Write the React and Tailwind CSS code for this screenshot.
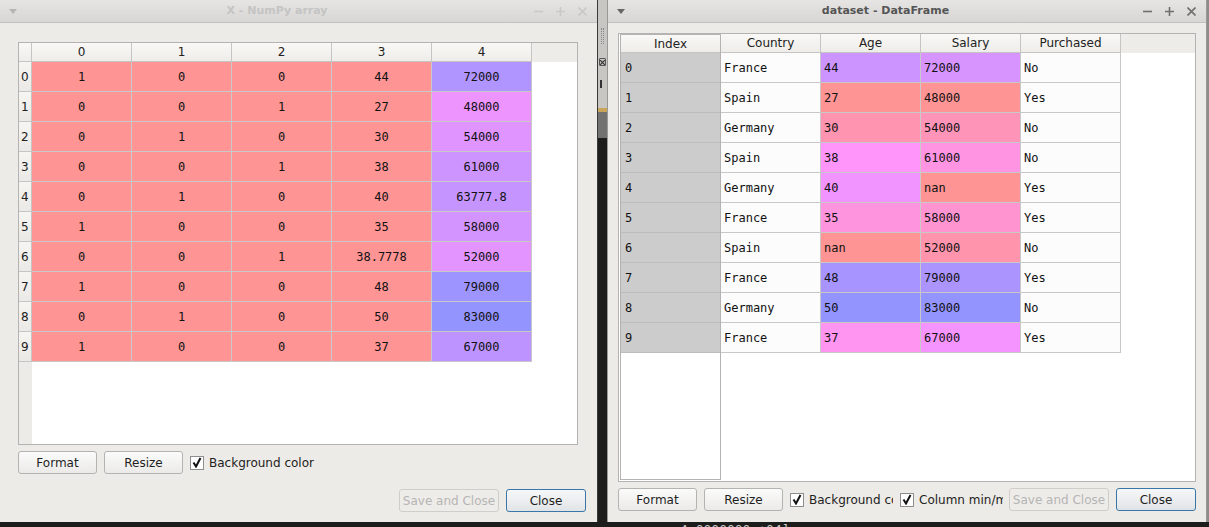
import React from "react";

const LEFT = [
  [1, 0, 0, 44, 72000],
  [0, 0, 1, 27, 48000],
  [0, 1, 0, 30, 54000],
  [0, 0, 1, 38, 61000],
  [0, 1, 0, 40, 63777.8],
  [1, 0, 0, 35, 58000],
  [0, 0, 1, 38.7778, 52000],
  [1, 0, 0, 48, 79000],
  [0, 1, 0, 50, 83000],
  [1, 0, 0, 37, 67000],
];

const DF = [
  ["France", 44, 72000, "No"],
  ["Spain", 27, 48000, "Yes"],
  ["Germany", 30, 54000, "No"],
  ["Spain", 38, 61000, "No"],
  ["Germany", 40, NaN, "Yes"],
  ["France", 35, 58000, "Yes"],
  ["Spain", NaN, 52000, "No"],
  ["France", 48, 79000, "Yes"],
  ["Germany", 50, 83000, "No"],
  ["France", 37, 67000, "Yes"],
];

function heat(v, min, max) {
  if (Number.isNaN(v)) return "rgb(255,148,148)";
  const t = max === min ? 0 : (max - v) / (max - min);
  const h = 240 + 120 * t;
  const lo = 148,
    hi = 255;
  let r, g, b;
  if (h <= 300) {
    r = lo + ((h - 240) / 60) * (hi - lo);
    g = lo;
    b = hi;
  } else {
    r = hi;
    g = lo;
    b = hi - ((h - 300) / 60) * (hi - lo);
  }
  return `rgb(${Math.round(r)},${g},${Math.round(b)})`;
}

function fmt(v) {
  if (Number.isNaN(v)) return "nan";
  return String(v);
}

function TitleBar({ title, active }) {
  const c = active ? "#6f6f6f" : "#c9c9c9";
  return (
    <div className="h-[23px] shrink-0 flex items-center bg-linear-to-b from-[#e6e5e3] to-[#d7d6d4] border-b border-[#c2c1bf]">
      <div className="w-[24px] flex justify-center pl-[2px]">
        <svg width="8" height="5" viewBox="0 0 8 5">
          <path d="M0 0 L8 0 L4 5 Z" fill={active ? "#666" : "#b5b5b5"} />
        </svg>
      </div>
      <div
        className={
          "flex-1 text-center font-bold text-[11px] " +
          (active ? "text-[#555555]" : "text-[#c4c4c4]")
        }
      >
        {title}
      </div>
      <div className="flex items-center gap-[13px] pr-[10px] pl-[4px]">
        <svg width="9" height="9" viewBox="0 0 9 9">
          <path d="M0 4.5 H9" stroke={c} strokeWidth="1.6" />
        </svg>
        <svg width="9" height="9" viewBox="0 0 9 9">
          <path d="M0 4.5 H9 M4.5 0 V9" stroke={c} strokeWidth="1.6" />
        </svg>
        <svg width="9" height="9" viewBox="0 0 9 9">
          <path d="M0.5 0.5 L8.5 8.5 M8.5 0.5 L0.5 8.5" stroke={c} strokeWidth="1.6" />
        </svg>
      </div>
    </div>
  );
}

function Btn({ children, w, kind }) {
  let cls =
    "h-[23px] shrink-0 rounded-[3px] border text-[12px] flex items-center justify-center whitespace-nowrap ";
  if (kind === "disabled")
    cls += "border-[#d0cecb] bg-[#eeece9] text-[#b5b5b5]";
  else if (kind === "default")
    cls +=
      "border-[#3a77a8] bg-linear-to-b from-[#f6f7f8] to-[#e1e4e7] text-[#1e1e1e]";
  else
    cls +=
      "border-[#b4b3b1] bg-linear-to-b from-[#fbfbfb] to-[#ebeae8] text-[#1e1e1e]";
  return (
    <div className={cls} style={{ width: w }}>
      {children}
    </div>
  );
}

function Check() {
  return (
    <div className="w-[14px] h-[14px] shrink-0 border border-[#8e8e8e] bg-white flex items-center justify-center">
      <svg width="10" height="11" viewBox="0 0 10 11">
        <path d="M1.5 5.5 L4 9.5 L8.5 1" stroke="#111" strokeWidth="2" fill="none" />
      </svg>
    </div>
  );
}

function LeftWindow() {
  return (
    <div className="w-[598px] h-[522px] shrink-0 flex flex-col bg-[#edebe7] border-r border-[#3a3a38]">
      <TitleBar title="X - NumPy array" active={false} />
      <div className="flex flex-col pl-[18px] pt-[19px]">
        <div className="w-[560px] h-[403px] border border-[#b4b3b1] bg-white flex flex-col overflow-hidden">
          <div className="h-[19px] shrink-0 flex bg-[#eeece9]">
            <div className="w-[13px] shrink-0 border-r border-b border-[#c6c5c3] bg-linear-to-b from-[#f9f8f6] to-[#efede9]" />
            {[0, 1, 2, 3, 4].map((i) => (
              <div
                key={i}
                className="w-[100px] shrink-0 border-r border-b border-[#c6c5c3] bg-linear-to-b from-[#f9f8f6] to-[#efede9] flex items-center justify-center text-[12px] text-[#222]"
              >
                {i}
              </div>
            ))}
          </div>
          {LEFT.map((row, r) => (
            <div key={r} className="h-[30px] shrink-0 flex">
              <div className="w-[13px] shrink-0 border-r border-b border-[#c6c5c3] bg-linear-to-b from-[#f6f5f2] to-[#ebe9e5] flex items-center pl-[2px] text-[12px] text-[#222]">
                {r}
              </div>
              {row.map((v, c) => (
                <div
                  key={c}
                  className="w-[100px] shrink-0 border-r border-b border-[#c8c8c8] flex items-center justify-center font-['DejaVu_Sans_Mono',monospace] text-[12px] text-[#111]"
                  style={{ backgroundColor: heat(v, 0, 83000) }}
                >
                  {fmt(v)}
                </div>
              ))}
            </div>
          ))}
          <div className="flex-1 flex">
            <div className="w-[13px] shrink-0 bg-[#edebe7]" />
            <div className="flex-1 bg-white" />
          </div>
        </div>
        <div className="flex items-center h-[23px] mt-[6px] gap-[7px]">
          <Btn w="79px">Format</Btn>
          <Btn w="79px">Resize</Btn>
          <div className="flex items-center gap-[5px] text-[12px] text-[#222]">
            <Check />
            <span>Background color</span>
          </div>
        </div>
        <div className="flex items-center justify-end h-[23px] mt-[15px] pr-[11px] gap-[7px]">
          <Btn w="100px" kind="disabled">
            Save and Close
          </Btn>
          <Btn w="80px" kind="default">
            Close
          </Btn>
        </div>
      </div>
    </div>
  );
}

function RightWindow() {
  const ageMin = 27,
    ageMax = 50,
    salMin = 48000,
    salMax = 83000;
  return (
    <div className="w-[600px] h-[522px] shrink-0 flex flex-col bg-[#edebe7] border-l border-r border-[#9a9997]">
      <TitleBar title="dataset - DataFrame" active={true} />
      <div className="flex flex-col pl-[10px] pt-[10px]">
        <div className="w-[578px] h-[449px] border border-[#b4b3b1] bg-white flex overflow-hidden">
          <div className="w-[101px] shrink-0 ml-[1px] mb-[1px] border-l border-r border-b border-t border-[#b4b3b1] flex flex-col bg-white">
            <div className="h-[18px] shrink-0 border-b border-[#c6c5c3] bg-linear-to-b from-[#f9f8f6] to-[#efede9] flex items-center justify-center text-[12px] text-[#222]">
              Index
            </div>
            {DF.map((_, r) => (
              <div
                key={r}
                className="h-[30px] shrink-0 border-b border-[#bdbdbd] bg-[#cccccc] flex items-center pl-[4px] font-['DejaVu_Sans_Mono',monospace] text-[12px] text-[#111]"
              >
                {r}
              </div>
            ))}
          </div>
          <div className="flex-1 flex flex-col">
            <div className="h-[19px] shrink-0 flex bg-[#eeece9]">
              {["Country", "Age", "Salary", "Purchased"].map((h) => (
                <div
                  key={h}
                  className="w-[100px] shrink-0 border-r border-b border-[#c6c5c3] bg-linear-to-b from-[#f9f8f6] to-[#efede9] flex items-center justify-center text-[12px] text-[#222]"
                >
                  {h}
                </div>
              ))}
            </div>
            {DF.map((row, r) => (
              <div key={r} className="h-[30px] shrink-0 flex">
                <div className="w-[100px] shrink-0 border-r border-b border-[#c8c8c8] bg-[#fcfcfc] flex items-center pl-[3px] font-['DejaVu_Sans_Mono',monospace] text-[12px] text-[#111]">
                  {row[0]}
                </div>
                <div
                  className="w-[100px] shrink-0 border-r border-b border-[#c8c8c8] flex items-center pl-[3px] font-['DejaVu_Sans_Mono',monospace] text-[12px] text-[#111]"
                  style={{ backgroundColor: heat(row[1], ageMin, ageMax) }}
                >
                  {fmt(row[1])}
                </div>
                <div
                  className="w-[100px] shrink-0 border-r border-b border-[#c8c8c8] flex items-center pl-[3px] font-['DejaVu_Sans_Mono',monospace] text-[12px] text-[#111]"
                  style={{ backgroundColor: heat(row[2], salMin, salMax) }}
                >
                  {fmt(row[2])}
                </div>
                <div className="w-[100px] shrink-0 border-r border-b border-[#c8c8c8] bg-[#fcfcfc] flex items-center pl-[3px] font-['DejaVu_Sans_Mono',monospace] text-[12px] text-[#111]">
                  {row[3]}
                </div>
              </div>
            ))}
            <div className="flex-1 bg-white" />
          </div>
        </div>
        <div className="flex items-center h-[23px] mt-[6px] text-[12px] text-[#222]">
          <Btn w="79px">Format</Btn>
          <div className="w-[7px]" />
          <Btn w="79px">Resize</Btn>
          <div className="w-[7px]" />
          <div className="w-[103px] shrink-0 flex items-center gap-[5px] overflow-hidden whitespace-nowrap">
            <Check />
            <span>Background color</span>
          </div>
          <div className="w-[7px]" />
          <div className="w-[103px] shrink-0 flex items-center gap-[5px] overflow-hidden whitespace-nowrap">
            <Check />
            <span>Column min/max</span>
          </div>
          <div className="w-[6px]" />
          <Btn w="100px" kind="disabled">
            Save and Close
          </Btn>
          <div className="w-[7px]" />
          <Btn w="80px" kind="default">
            Close
          </Btn>
        </div>
      </div>
    </div>
  );
}

function Strip() {
  return (
    <div className="w-[9px] h-[522px] shrink-0 flex flex-col">
      <div className="h-[108px] bg-[#c7c6c3] flex flex-col items-center pt-[28px] gap-[14px]">
        <div className="w-[3px] h-[16px] border-l border-r border-dotted border-[#8a8a8a]" />
        <div className="w-[7px] h-[8px] border border-[#555] rounded-[1px] flex items-center justify-center">
          <svg width="5" height="5" viewBox="0 0 5 5">
            <path d="M0 0 L5 5 M5 0 L0 5" stroke="#333" strokeWidth="1.2" />
          </svg>
        </div>
        <div className="w-[5px] h-[8px] border-l-2 border-[#333]" />
      </div>
      <div className="h-[4px] bg-[#c9a55a]" />
      <div className="h-[26px] bg-[#727270]" />
      <div className="flex-1 bg-[#1d1d1b]" />
    </div>
  );
}

export default function App() {
  return (
    <div className="w-[1209px] h-[527px] overflow-hidden bg-[#1d1d1b] flex flex-col font-['DejaVu_Sans',sans-serif]">
      <div className="flex h-[522px] shrink-0">
        <LeftWindow />
        <Strip />
        <RightWindow />
        <div className="flex-1 bg-[#8d8c8a]" />
      </div>
      <div className="h-[5px] overflow-hidden pl-[680px]">
        <div className="font-['DejaVu_Sans_Mono',monospace] text-[13px] leading-[13px] text-[#c8c8c8] mt-[1px] whitespace-nowrap">
          4.0000000e+04],
        </div>
      </div>
    </div>
  );
}
